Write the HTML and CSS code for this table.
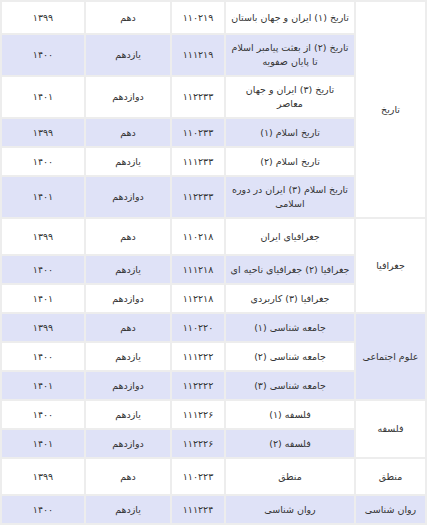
FILE: index.html
```html
<!DOCTYPE html>
<html lang="fa" dir="rtl">
<head>
<meta charset="utf-8">
<title>جدول دروس</title>
<link rel="stylesheet" href="styles.css">
</head>
<body>
<div class="wrap">
<table class="courses">
<colgroup>
<col class="c-subject"><col class="c-title"><col class="c-code"><col class="c-grade"><col class="c-year">
</colgroup>
<tbody>
<tr class="odd tall1">
<td rowspan="6">تاریخ</td><td>تاریخ (۱) ایران و جهان باستان</td><td>۱۱۰۲۱۹</td><td>دهم</td><td>۱۳۹۹</td>
</tr>
<tr class="even">
<td>تاریخ (۲) از بعثت پیامبر اسلام تا پایان صفویه</td><td>۱۱۱۲۱۹</td><td>یازدهم</td><td>۱۴۰۰</td>
</tr>
<tr class="odd">
<td>تاریخ (۳) ایران و جهان<br>معاصر</td><td>۱۱۲۲۳۳</td><td>دوازدهم</td><td>۱۴۰۱</td>
</tr>
<tr class="even">
<td>تاریخ اسلام (۱)</td><td>۱۱۰۲۳۳</td><td>دهم</td><td>۱۳۹۹</td>
</tr>
<tr class="odd">
<td>تاریخ اسلام (۲)</td><td>۱۱۱۲۳۳</td><td>یازدهم</td><td>۱۴۰۰</td>
</tr>
<tr class="even">
<td>تاریخ اسلام (۳) ایران در دوره اسلامی</td><td>۱۱۲۲۳۳</td><td>دوازدهم</td><td>۱۴۰۱</td>
</tr>
<tr class="odd tall2">
<td rowspan="3">جغرافیا</td><td>جغرافیای ایران</td><td>۱۱۰۲۱۸</td><td>دهم</td><td>۱۳۹۹</td>
</tr>
<tr class="even">
<td>جغرافیا (۲) جغرافیای ناحیه ای</td><td>۱۱۱۲۱۸</td><td>یازدهم</td><td>۱۴۰۰</td>
</tr>
<tr class="odd">
<td>جغرافیا (۳) کاربردی</td><td>۱۱۲۲۱۸</td><td>دوازدهم</td><td>۱۴۰۱</td>
</tr>
<tr class="even">
<td rowspan="3">علوم اجتماعی</td><td>جامعه شناسی (۱)</td><td>۱۱۰۲۲۰</td><td>دهم</td><td>۱۳۹۹</td>
</tr>
<tr class="odd">
<td>جامعه شناسی (۲)</td><td>۱۱۱۲۲۲</td><td>یازدهم</td><td>۱۴۰۰</td>
</tr>
<tr class="even">
<td>جامعه شناسی (۳)</td><td>۱۱۲۲۲۲</td><td>دوازدهم</td><td>۱۴۰۱</td>
</tr>
<tr class="odd">
<td rowspan="2">فلسفه</td><td>فلسفه (۱)</td><td>۱۱۱۲۲۶</td><td>یازدهم</td><td>۱۴۰۰</td>
</tr>
<tr class="even">
<td>فلسفه (۲)</td><td>۱۱۲۲۲۶</td><td>دوازدهم</td><td>۱۴۰۱</td>
</tr>
<tr class="odd tall2">
<td>منطق</td><td>منطق</td><td>۱۱۰۲۲۳</td><td>دهم</td><td>۱۳۹۹</td>
</tr>
<tr class="even">
<td>روان شناسی</td><td>روان شناسی</td><td>۱۱۱۲۲۴</td><td>یازدهم</td><td>۱۴۰۰</td>
</tr>
</tbody>
</table>
</div>
</body>
</html>
```

FILE: styles.css
```css
html, body {
  margin: 0;
  padding: 0;
  background: #ffffff;
}
.wrap {
  padding: 0 1px 0 2px;
}
.courses {
  width: 425px;
  border-collapse: separate;
  border-spacing: 2px;
  background: #ededed;
  table-layout: fixed;
  font-family: "DejaVu Sans", sans-serif;
  font-size: 9.5px;
  color: #333333;
}
.c-subject { width: 69px; }
.c-title { width: 128px; }
.c-code { width: 52px; }
.c-grade { width: 84px; }
.c-year { width: 82px; }
.courses td {
  text-align: center;
  vertical-align: middle;
  padding: 6px 3px;
  line-height: 14px;
  height: 15px;
}
.courses tr.odd td { background: #ffffff; }
.courses tr.even td { background: #dfe2f7; }
.courses tr.tall1 td { height: 19px; }
.courses tr.tall2 td { height: 23px; }
```
